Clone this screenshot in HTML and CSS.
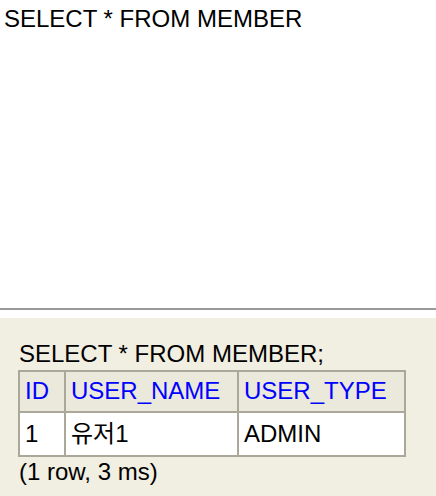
FILE: index.html
```html
<!DOCTYPE html>
<html lang="ko">
<head>
<meta charset="utf-8">
<title>H2 Console</title>
<link rel="stylesheet" href="styles.css">
</head>
<body>
<div class="editor">SELECT * FROM MEMBER</div>
<div class="divider"></div>
<div class="spacer"></div>
<div class="result">
  <div class="statement">SELECT * FROM MEMBER;</div>
  <table class="grid">
    <tr>
      <th class="c-id">ID</th>
      <th class="c-name">USER_NAME</th>
      <th class="c-type">USER_TYPE</th>
    </tr>
    <tr>
      <td>1</td>
      <td>유저1</td>
      <td>ADMIN</td>
    </tr>
  </table>
  <div class="status">(1 row, 3 ms)</div>
</div>
</body>
</html>
```

FILE: styles.css
```css
html, body {
  margin: 0;
  padding: 0;
  background: #ffffff;
}
body {
  font-family: "Liberation Sans", Arial, "Noto Sans CJK KR", sans-serif;
  font-size: 24px;
  line-height: 28px;
  color: #000;
  width: 436px;
  height: 496px;
  overflow: hidden;
}
.editor {
  height: 308px;
  box-sizing: border-box;
  padding: 5px 4px;
  background: #ffffff;
}
.divider {
  height: 2px;
  background: #999999;
}
.spacer {
  height: 8px;
  background: #ffffff;
}
.result {
  background: #f1eee2;
  height: 178px;
  box-sizing: border-box;
  padding: 22px 0 0 18px;
}
.statement {
  padding-left: 1px;
  margin-bottom: 2px;
}
.grid {
  border-collapse: collapse;
  border: 2px solid #aca899;
  background: #ffffff;
}
.grid th, .grid td {
  border: 2px solid #aca899;
  text-align: left;
  font-weight: normal;
  white-space: nowrap;
  vertical-align: top;
  box-sizing: content-box;
}
.grid th {
  background: #ebe8dc;
  color: #0000ff;
  padding: 5px 4px 6px 5px;
}
.grid td {
  background: #ffffff;
  padding: 7px 4px 7px 5px;
  height: 28px;
}
.c-id { width: 35px; }
.c-name { width: 162px; }
.c-type { width: 156px; }
.status {
  padding-left: 1px;
  padding-top: 1px;
}
```
